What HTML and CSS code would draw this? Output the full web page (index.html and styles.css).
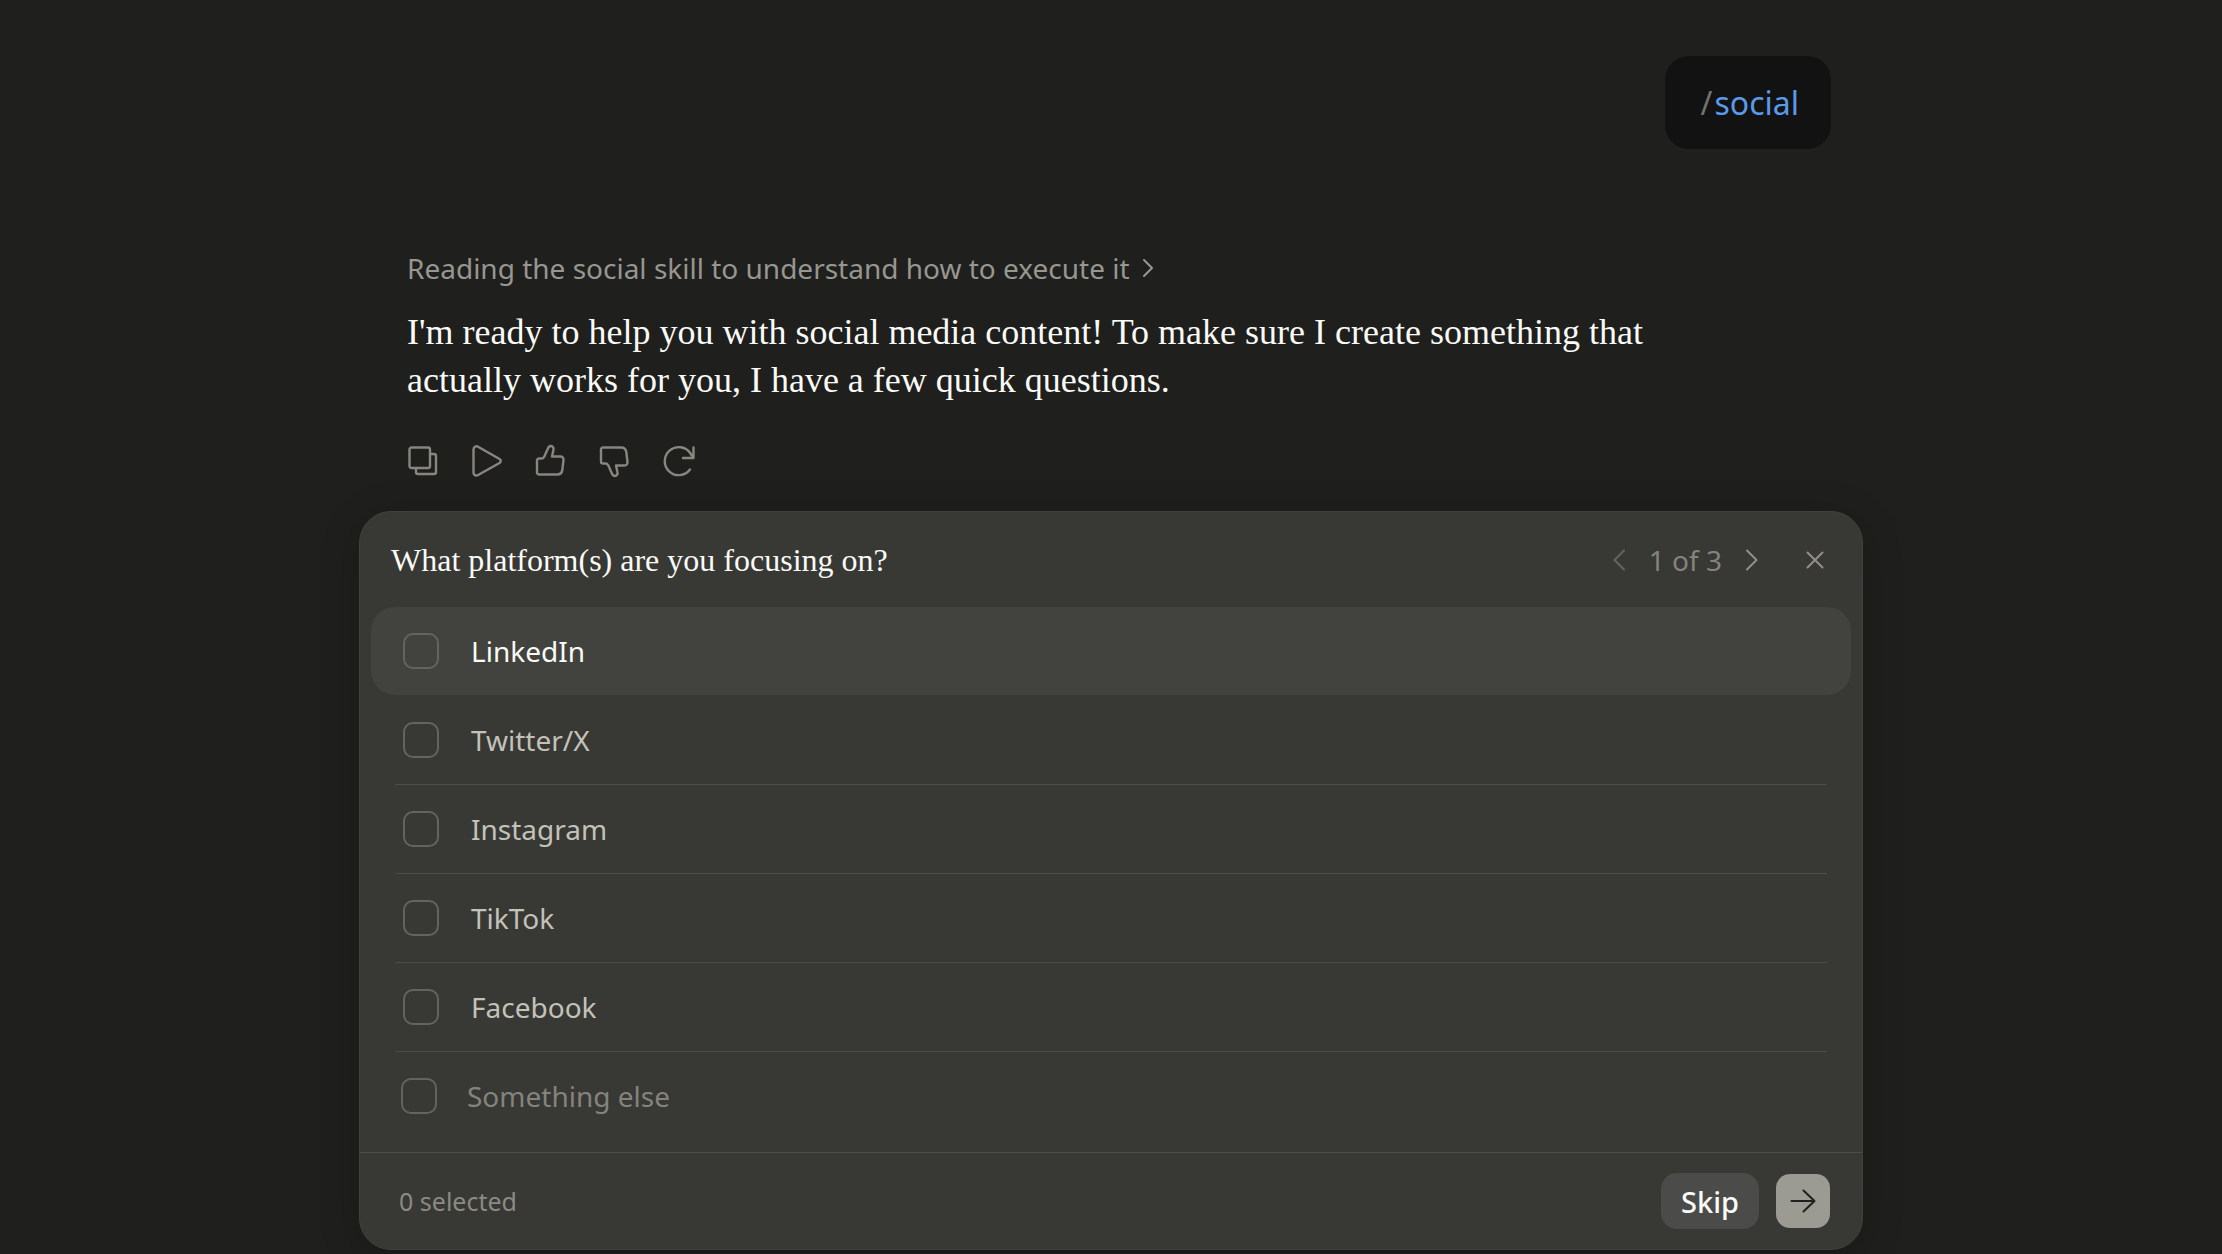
FILE: index.html
```html
<!DOCTYPE html>
<html lang="en">
<head>
<meta charset="utf-8">
<meta name="viewport" content="width=device-width, initial-scale=1">
<title>Social chat</title>
<link rel="stylesheet" href="styles.css">
</head>
<body>
<main class="chat">
  <div class="thread">
    <div class="bubble"><span class="slash">/</span><span class="command">social</span></div>
    <article class="reply">
      <button class="thinking" type="button">
        <span>Reading the social skill to understand how to execute it</span>
        <svg class="icon-small" viewBox="0 0 20 20" aria-hidden="true"><path d="M6 2l8 8-8 8"/></svg>
      </button>
      <p class="message">I'm ready to help you with social media content! To make sure I create something that actually works for you, I have a few quick questions.</p>
      <div class="actions">
        <button class="icon-button" type="button" aria-label="Copy"><svg viewBox="0 0 32 32"><rect x="2.500" y="2.500" width="20.500" height="20.500" rx="2"/><path d="M23 9h4a2 2 0 0 1 2 2v16a2 2 0 0 1-2 2H11a2 2 0 0 1-2-2v-4"/></svg></button>
        <button class="icon-button" type="button" aria-label="Read aloud"><svg viewBox="0 0 32 32"><path d="M2.500 4.500v23c0 2.500 2.500 3.800 4.600 2.500l21.400-12c1.700-1.200 1.700-2.800 0-4L7.100 1.700C5 .500 2.500 2 2.500 4.500z"/></svg></button>
        <button class="icon-button" type="button" aria-label="Good response"><svg viewBox="0 0 32 32"><path d="M4 13.500h2.500c1.200 0 2-.600 2.600-1.600l3.700-8.200C13.500 2 14.500 1 15.800 1c2.200 0 3.200 2 2.600 4.200L17 11.500h8.500c2 0 3.200 1.600 3 3.500l-1.200 10c-.400 3-2.300 4.500-5.300 4.500H4a2 2 0 0 1-2-2v-12a2 2 0 0 1 2-2z"/></svg></button>
        <button class="icon-button" type="button" aria-label="Bad response"><svg viewBox="0 0 32 32"><path d="M4 18.500h2.500c1.200 0 2 .600 2.600 1.600l3.700 8.200c.700 1.700 1.700 2.700 3 2.700 2.200 0 3.200-2 2.600-4.200L17 20.500h8.500c2 0 3.200-1.600 3-3.500L27.300 7c-.400-3-2.300-4.500-5.300-4.500H4a2 2 0 0 0-2 2v12a2 2 0 0 0 2 2z"/></svg></button>
        <button class="icon-button" type="button" aria-label="Retry"><svg viewBox="0 0 32 32"><path d="M27 24.500A14 14 0 1 1 27.500 8.500l3 4.500M30.500 2.500V13H20"/></svg></button>
      </div>
    </article>
  </div>
  <form class="card">
    <header class="card-header">
      <h2 class="question">What platform(s) are you focusing on?</h2>
      <nav class="pager" aria-label="Questions">
        <button class="icon-plain faded" type="button" aria-label="Previous"><svg viewBox="0 0 24 24"><path d="M17 2.500L7.500 12l9.500 9.500"/></svg></button>
        <span class="count">1 of 3</span>
        <button class="icon-plain" type="button" aria-label="Next"><svg viewBox="0 0 24 24"><path d="M7 2.500l9.500 9.500L7 21.500"/></svg></button>
        <button class="icon-plain close" type="button" aria-label="Close"><svg viewBox="0 0 24 24"><path d="M4.500 4.500l15 15M19.500 4.500l-15 15"/></svg></button>
      </nav>
    </header>
    <div class="options">
      <label class="option active"><input class="box" type="checkbox"><span>LinkedIn</span></label>
      <label class="option"><input class="box" type="checkbox"><span>Twitter/X</span></label>
      <label class="option"><input class="box" type="checkbox"><span>Instagram</span></label>
      <label class="option"><input class="box" type="checkbox"><span>TikTok</span></label>
      <label class="option"><input class="box" type="checkbox"><span>Facebook</span></label>
      <div class="option other"><input class="box" type="checkbox" aria-label="Something else"><input class="other-text" type="text" placeholder="Something else" aria-label="Your own answer"></div>
    </div>
    <footer class="card-footer">
      <span class="selected">0 selected</span>
      <button class="skip" type="button">Skip</button>
      <button class="next" type="submit" aria-label="Continue"><svg viewBox="0 0 26 26"><path d="M1.500 13h23M13.500 2.500L24.500 13l-11 10.500"/></svg></button>
    </footer>
  </form>
</main>
</body>
</html>
```
FILE: styles.css
```css
* { box-sizing: border-box; }

body {
  margin: 0;
  background: #1f1f1e;
  color: #fafaf7;
  font-family: "Noto Sans", "Liberation Sans", sans-serif;
  font-size: 28px;
}

button {
  border: 0;
  padding: 0;
  background: none;
  color: inherit;
  font: inherit;
}

svg {
  display: block;
  fill: none;
  stroke: currentColor;
  stroke-width: 2;
  stroke-linecap: round;
  stroke-linejoin: round;
  overflow: visible;
}

.chat {
  max-width: 1504px;
  margin: 0 auto;
  padding: 56px 0 5px;
}

.thread {
  display: flex;
  flex-direction: column;
  padding: 0 32px;
}

.bubble {
  display: flex;
  align-self: flex-end;
  gap: 2px;
  padding: 23px 32px 22px 36px;
  border-radius: 24px;
  background: #121212;
  font-size: 32px;
  line-height: 48px;
}

.slash { color: #73726c; }
.command { color: #5a9ae8; }

.reply {
  padding: 99px 16px 34px;
}

.thinking {
  display: flex;
  align-items: center;
  gap: 8px;
  color: #97968f;
  line-height: 40px;
}

.icon-small {
  width: 20px;
  height: 20px;
}

.message {
  margin: 20px 0 0;
  max-width: 1300px;
  font-family: "Liberation Serif", serif;
  font-size: 36px;
  line-height: 48px;
}

.actions {
  display: flex;
  gap: 32px;
  margin-top: 41px;
  color: #87867f;
}

.icon-button svg {
  width: 32px;
  height: 32px;
  stroke-width: 2.4;
}

.card {
  border: 1px solid #40403c;
  border-radius: 32px;
  background: #383834;
  box-shadow: 0 8px 40px rgba(0, 0, 0, 0.2);
}

.card-header {
  display: flex;
  align-items: center;
  justify-content: space-between;
  min-height: 95px;
  padding: 0 35px 0 31px;
}

.question {
  margin: 0;
  font-family: "Liberation Serif", serif;
  font-size: 32px;
  font-weight: 400;
  line-height: 40px;
}

.pager {
  display: flex;
  align-items: center;
  gap: 18px;
  color: #91908a;
}

.icon-plain svg {
  width: 24px;
  height: 24px;
}

.faded { opacity: 0.5; }
.count { color: #84837c; }
.close { margin-left: 21px; }

.options {
  padding: 0 11px 12px;
}

.option {
  display: flex;
  align-items: center;
  gap: 32px;
  height: 89px;
  margin: 0 24px;
  padding: 0 8px;
  border-bottom: 1px solid #4c4c48;
  color: #c3c2b9;
}

.option.active {
  height: 88px;
  margin: 0 0 1px;
  padding: 0 32px;
  border: 0;
  border-radius: 24px;
  background: #42423e;
  color: #fafaf7;
}

.option.other {
  height: 88px;
  gap: 30px;
  padding: 0 6px;
  border: 0;
}

.box {
  appearance: none;
  width: 36px;
  height: 36px;
  margin: 0;
  border: 2px solid #64645f;
  border-radius: 10px;
}

.other-text {
  flex: 1;
  border: 0;
  padding: 0;
  background: none;
  color: inherit;
  font: inherit;
}

.other-text::placeholder { color: #84837c; }

.card-footer {
  display: flex;
  align-items: center;
  min-height: 97px;
  padding: 0 32px 0 39px;
  border-top: 1px solid #4c4c48;
}

.selected {
  margin-right: auto;
  color: #8b8a83;
  font-size: 25px;
}

.skip {
  height: 56px;
  padding: 0 20px;
  border-radius: 16px;
  background: #4b4b49;
  font-size: 29px;
  font-weight: 500;
}

.next {
  display: grid;
  place-items: center;
  width: 54px;
  height: 54px;
  margin-left: 17px;
  border-radius: 14px;
  background: #9b9b94;
  color: #20201e;
}

.next svg {
  width: 26px;
  height: 26px;
}
```
